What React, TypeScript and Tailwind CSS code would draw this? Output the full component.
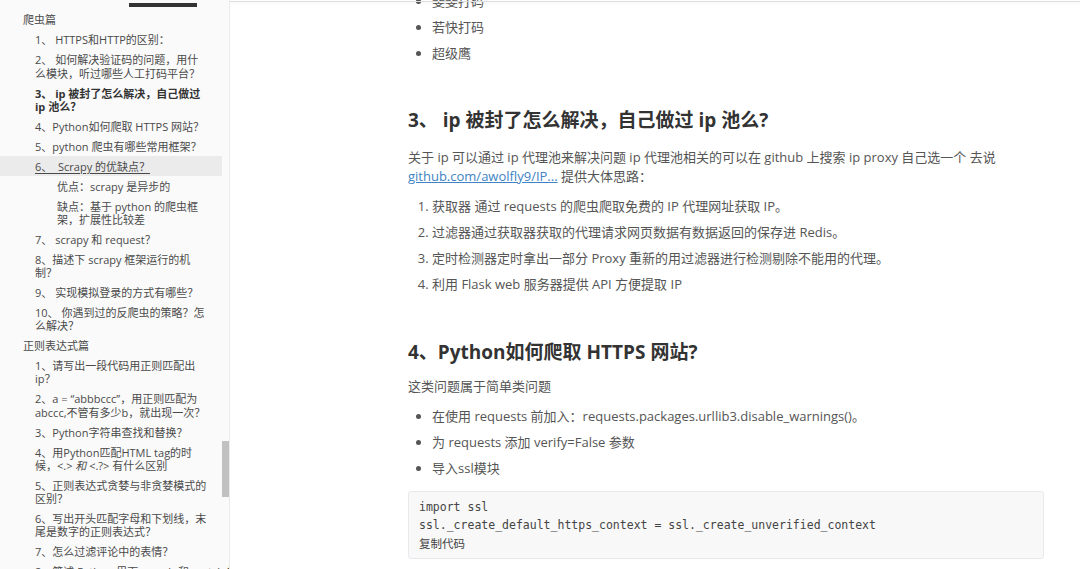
import React from "react";

type OutlineItem = {
  level: 0 | 1 | 2;
  lines: React.ReactNode[];
  bold?: boolean;
  active?: boolean;
};

const outline: OutlineItem[] = [
  { level: 0, lines: ["爬虫篇"] },
  { level: 1, lines: ["1、 HTTPS和HTTP的区别："] },
  { level: 1, lines: ["2、 如何解决验证码的问题，用什", "么模块，听过哪些人工打码平台？"] },
  { level: 1, bold: true, lines: ["3、 ip 被封了怎么解决，自己做过", "ip 池么？"] },
  { level: 1, lines: ["4、Python如何爬取 HTTPS 网站？"] },
  { level: 1, lines: ["5、python 爬虫有哪些常用框架？"] },
  { level: 1, active: true, lines: ["6、\u00a0 Scrapy 的优缺点？"] },
  { level: 2, lines: ["优点：scrapy 是异步的"] },
  { level: 2, lines: ["缺点：基于 python 的爬虫框", "架，扩展性比较差"] },
  { level: 1, lines: ["7、 scrapy 和 request？"] },
  { level: 1, lines: ["8、描述下 scrapy 框架运行的机", "制？"] },
  { level: 1, lines: ["9、 实现模拟登录的方式有哪些？"] },
  { level: 1, lines: ["10、 你遇到过的反爬虫的策略？怎", "么解决？"] },
  { level: 0, lines: ["正则表达式篇"] },
  { level: 1, lines: ["1、请写出一段代码用正则匹配出", "ip？"] },
  { level: 1, lines: ["2、a = “abbbccc”，用正则匹配为", "abccc,不管有多少b，就出现一次？"] },
  { level: 1, lines: ["3、Python字符串查找和替换？"] },
  {
    level: 1,
    lines: [
      "4、用Python匹配HTML tag的时",
      <>
        候，&lt;.&gt; <em>和</em> &lt;.?&gt; 有什么区别
      </>,
    ],
  },
  { level: 1, lines: ["5、正则表达式贪婪与非贪婪模式的", "区别？"] },
  { level: 1, lines: ["6、写出开头匹配字母和下划线，末", "尾是数字的正则表达式？"] },
  { level: 1, lines: ["7、怎么过滤评论中的表情？"] },
  { level: 1, lines: ["8、简述 Python 里面 search 和 match 的区别？"] },
];

const indent = {
  0: "pl-[23px]",
  1: "pl-[35px]",
  2: "pl-[57px]",
};

const Sidebar = () => {
  return (
    <aside className="relative w-[230px] shrink-0 h-full bg-[#fafafa] border-r border-[#ebebeb] overflow-hidden">
      {/* bottom edge of the outline toggle */}
      <div className="ml-[129px] mt-[3px] h-[4px] w-[68px] bg-[#333]" />
      <ul className="mt-[3px] pr-[7px] text-[11px] leading-[13.2px] text-[#4a4a4a]">
        {outline.map((item, i) => (
          <li
            key={i}
            className={`py-[3.4px] whitespace-nowrap ${indent[item.level]} ${
              item.bold ? "font-bold text-[#333]" : ""
            } ${item.active ? "bg-[#ebebeb] underline underline-offset-2" : ""}`}
          >
            {item.lines.map((line, j) => (
              <div key={j}>{line}</div>
            ))}
          </li>
        ))}
      </ul>
      {/* scrollbar thumb */}
      <div className="absolute right-0 top-[441px] h-[56px] w-[7px] bg-[#c1c1c1]" />
    </aside>
  );
};

const Content = () => {
  return (
    <main className="relative flex-1 h-full bg-white overflow-hidden">
      <div className="absolute left-0 right-0 top-[1px] h-px bg-[#dedede] shadow-[0_1px_3px_rgba(0,0,0,0.08)]" />
      <div className="ml-[178px] w-[636px] -mt-[8px] text-[13px] leading-[19px] text-[#555]">
        <ul className="list-disc pl-[24px] space-y-[7px]">
          <li>斐斐打码</li>
          <li>若快打码</li>
          <li>超级鹰</li>
        </ul>

        <h2 className="mt-[43px] text-[19px] leading-[28px] font-bold text-[#333]">
          3、 ip 被封了怎么解决，自己做过 ip 池么?
        </h2>
        <p className="mt-[13.5px]">
          关于 ip 可以通过 ip 代理池来解决问题 ip 代理池相关的可以在 github 上搜索 ip proxy 自己选一个 去说{" "}
          <a className="text-[#4183c4] underline">github.com/awolfly9/IP...</a> 提供大体思路：
        </p>
        <ol className="mt-[11px] list-decimal pl-[24px] space-y-[7px]">
          <li>获取器 通过 requests 的爬虫爬取免费的 IP 代理网址获取 IP。</li>
          <li>过滤器通过获取器获取的代理请求网页数据有数据返回的保存进 Redis。</li>
          <li>定时检测器定时拿出一部分 Proxy 重新的用过滤器进行检测剔除不能用的代理。</li>
          <li>利用 Flask web 服务器提供 API 方便提取 IP</li>
        </ol>

        <h2 className="mt-[44.5px] text-[19px] leading-[28px] font-bold text-[#333]">
          4、Python如何爬取 HTTPS 网站?
        </h2>
        <p className="mt-[10.5px]">这类问题属于简单类问题</p>
        <ul className="mt-[11px] list-disc pl-[24px] space-y-[7px]">
          <li>在使用 requests 前加入：requests.packages.urllib3.disable_warnings()。</li>
          <li>为 requests 添加 verify=False 参数</li>
          <li>导入ssl模块</li>
        </ul>

        <pre className="mt-[13.5px] bg-[#f8f8f8] border border-[#e7eaed] rounded-[3px] px-[10px] pt-[6px] pb-[5px] text-[11.5px] leading-[18px] text-[#444] font-['DejaVu_Sans_Mono','Noto_Sans_CJK_SC',monospace]">
          {"import ssl\nssl._create_default_https_context = ssl._create_unverified_context\n"}
          <span className="font-['Noto_Sans_CJK_SC',sans-serif]">复制代码</span>
        </pre>
      </div>
    </main>
  );
};

export default function App() {
  return (
    <div className="flex w-[1080px] h-[569px] overflow-hidden font-['Open_Sans','Noto_Sans_CJK_SC',sans-serif]">
      <Sidebar />
      <Content />
    </div>
  );
}
